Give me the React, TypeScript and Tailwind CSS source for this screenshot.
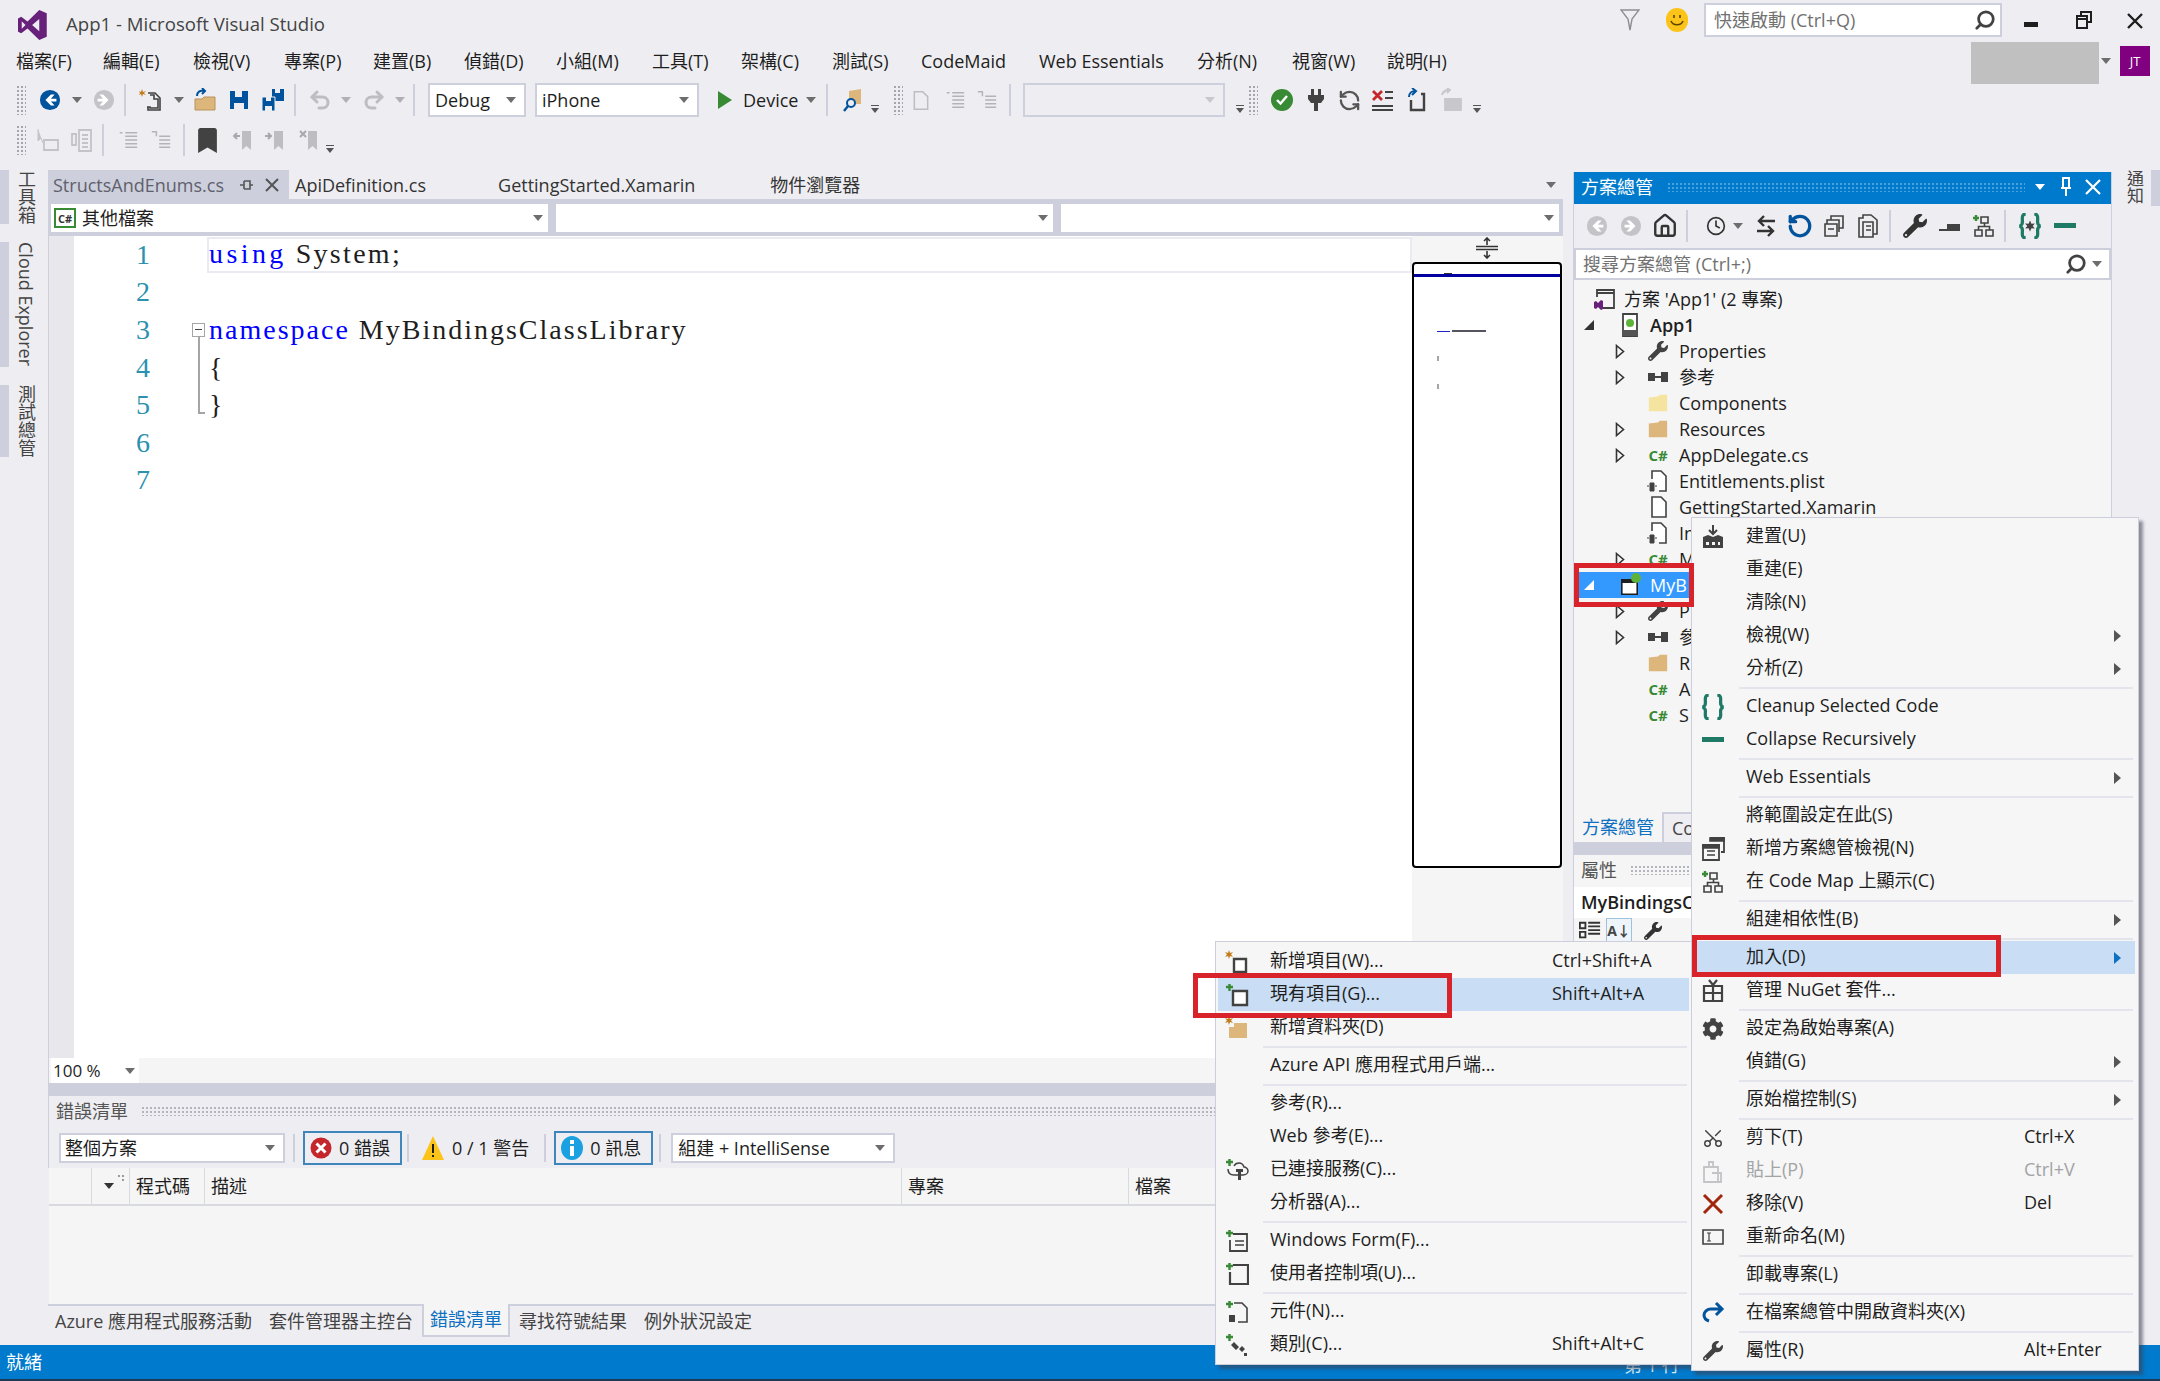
import type { ReactNode } from "react"
import { Redo2, Undo2, Scissors, RefreshCcw, RotateCw, Search, Clock, House } from "lucide-react"
import { FaBookmark, FaCog, FaWrench } from "react-icons/fa"

const Caret = ({ color = "#6d6d6d" }: { color?: string }) => (
  <svg width="10" height="6" viewBox="0 0 10 6" className="shrink-0">
    <path d="M0 0h10L5 6z" fill={color} />
  </svg>
)

const More = () => (
  <svg width="10" height="10" viewBox="0 0 10 10" className="mt-[18px]">
    <path d="M1 1h8v1H1zM1 4h8L5 9z" fill="#555" />
  </svg>
)

const Grip = () => <div className="h-[30px] w-[10px] shrink-0 bg-[radial-gradient(#a5a5ad_1px,transparent_1.2px)] bg-[length:4px_4px]" />
const Sep = () => <div className="h-[32px] w-[2px] shrink-0 bg-[#cdd0dc]" />

const Ico = ({ children, w = 24, h = 24 }: { children: ReactNode; w?: number; h?: number }) => (
  <svg width={w} height={h} viewBox="0 0 24 24" className="shrink-0">
    {children}
  </svg>
)

const VsLogo = ({ size = 30 }: { size?: number }) => (
  <svg width={size} height={size} viewBox="0 0 24 24" className="shrink-0">
    <path d="M17 0l6 2.6v18.8L17 24 7.6 14.8 2.6 18.6 0 17.3V6.7l2.6-1.3 5 3.8zM3 9v6l3-3zm14-1.9L11.3 12l5.7 4.9z" fill="#68217a" />
  </svg>
)

const CircleArrow = ({ color, dir }: { color: string; dir: "l" | "r" }) => (
  <Ico w={22} h={22}>
    <circle cx="12" cy="12" r="11" fill={color} />
    <path d={dir === "l" ? "M13 6l-6 6 6 6h4l-4-4.5h6v-3h-6L17 6z" : "M11 6l6 6-6 6H7l4-4.5H5v-3h6L7 6z"} fill="#fff" />
  </Ico>
)

const NewProjectIcon = () => (
  <Ico>
    <path d="M3 1l1 3 3-1-2 2 2 2-3-1-1 3-1-3-2 1 1-2-1-2 2 1z" fill="#c27d1a" />
    <path d="M9 5h7l5 5v12H9v-3h-1 3v1h8V11h-4V7H11" fill="none" stroke="#424242" strokeWidth="1.6" />
  </Ico>
)

const OpenIcon = () => (
  <Ico>
    <path d="M2 11h7l2-2h11v13H2z" fill="#dcb67a" stroke="#b8935a" strokeWidth="1" />
    <path d="M4 8c0-4 3-6 7-5M9 0l3 3-3 3" fill="none" stroke="#00539c" strokeWidth="2" />
  </Ico>
)

const SaveIcon = () => (
  <Ico>
    <path d="M3 3h18v18H3z" fill="#00539c" />
    <path d="M8 3h7v6H8zM7 15h10v6H7z" fill="#eeeef2" />
  </Ico>
)

const SaveAllIcon = () => (
  <Ico>
    <path d="M11 1h12v12H11z" fill="#00539c" />
    <path d="M14 1h5v4h-5z" fill="#eeeef2" />
    <path d="M1 9h13v14H1z" fill="#00539c" stroke="#eeeef2" />
    <path d="M5 9h5v4H5zM4 18h7v5H4z" fill="#eeeef2" />
  </Ico>
)

const DocLines = ({ color = "#b4b4b8" }: { color?: string }) => (
  <Ico w={22} h={22}>
    <path d="M9 4h13M9 8h13M9 12h13M9 16h13M9 20h13M3 4h3" stroke={color} strokeWidth="1.6" />
  </Ico>
)

const OutdentLines = () => (
  <Ico w={22} h={22}>
    <path d="M10 8h12M10 12h12M10 16h12M10 20h12" stroke="#b4b4b8" strokeWidth="1.6" />
    <path d="M2 3h5v5" fill="none" stroke="#b4b4b8" strokeWidth="1.6" />
  </Ico>
)

const GrayBookmark = ({ mark }: { mark: string }) => (
  <Ico>
    <path d="M10 3h9v19l-4.5-4-4.5 4z" fill="#bdbdc2" />
    <path d={mark} fill="none" stroke="#a8a8ae" strokeWidth="2" />
  </Ico>
)

const PlugIcon = ({ color = "#424242" }: { color?: string }) => (
  <Ico>
    <path d="M7 1h3v6H7zM14 1h3v6h-3zM4 7h16v4l-3 4h-3v8h-4v-8H7l-3-4z" fill={color} />
  </Ico>
)

const MapIcon = () => (
  <Ico>
    <path d="M1 4h6M4 1v6" stroke="#388a34" strokeWidth="2.4" />
    <path d="M9 3h7v6H9zM3 16h7v6H3zM14 16h7v6h-7zM12.5 9v3.5M6.500 16v-3.500h11V16" fill="none" stroke="#424242" strokeWidth="1.6" />
  </Ico>
)

const BracesIcon = ({ star = false }: { star?: boolean }) => (
  <Ico w={26} h={26}>
    <path d="M8 1C4 1 5 5 5 8c0 2-1 4-3 4 2 0 3 2 3 4 0 3-1 7 3 7M16 1c4 0 3 4 3 7 0 2 1 4 3 4-2 0-3 2-3 4 0 3 1 7-3 7" fill="none" stroke="#1e7a64" strokeWidth="3" />
    {star && <path d="M12 7l1.300 3 3.200-.4-2 2.400 2 2.400-3.200-.4L12 17l-1.300-3-3.200.4 2-2.400-2-2.400 3.200.4z" fill="#424242" />}
  </Ico>
)

const TealDash = () => (
  <Ico>
    <path d="M1 9h22v5H1z" fill="#1e7a64" />
  </Ico>
)

const DarkDash = () => (
  <Ico>
    <path d="M1 15h8v2H1zM9 10h13v7H9z" fill="#424242" />
  </Ico>
)

const Folder = ({ color = "#dcb67a" }: { color?: string }) => (
  <Ico w={22} h={22}>
    <path d="M2 6l10-1 2-2h8v18H2z" fill={color} />
  </Ico>
)

const FileIcon = ({ lock = false }: { lock?: boolean }) => (
  <Ico w={24} h={24}>
    <path d={lock ? "M6 10V2h9l5 5v15H13" : "M6 22V2h9l5 5v15z"} fill="#fff" stroke="#424242" strokeWidth="1.600" />
    {lock && <path d="M4 14h4v8H4zM1 17h2M9 17h2" fill="#424242" stroke="#424242" strokeWidth="1" />}
  </Ico>
)

const CSharp = () => <span className="text-[15px] leading-none font-bold text-[#388a34]">C#</span>

const PhoneApple = () => (
  <Ico>
    <path d="M5 1h14v22H5z" fill="#fff" stroke="#424242" strokeWidth="1.800" />
    <path d="M5 17h14v6H5z" fill="#555" />
    <circle cx="12" cy="10" r="4" fill="#5db33a" />
  </Ico>
)

const RefsIcon = () => (
  <Ico>
    <path d="M2 8h7v8H2zM15 7h7v10h-7zM9 11h6v2H9z" fill="#424242" />
  </Ico>
)

const SolutionIcon = () => (
  <Ico>
    <path d="M5 10V3h17v18H11" fill="none" stroke="#424242" strokeWidth="1.800" />
    <path d="M5 5h17v2H5z" fill="#424242" />
    <path d="M9 13l-3 3-2-2-2 1v6l2 1 2-2 3 3 2-1v-8z" fill="#68217a" />
  </Ico>
)

const TreeArrow = ({ open, white = false }: { open?: boolean; white?: boolean }) =>
  open ? (
    <svg width="12" height="12" viewBox="0 0 12 12">
      <path d="M1 11L11 1v10z" fill={white ? "#fff" : "#333"} />
    </svg>
  ) : (
    <svg width="10" height="15" viewBox="0 0 10 15">
      <path d="M1.500 1.500l7 6-7 6z" fill="none" stroke="#333" strokeWidth="1.600" />
    </svg>
  )

const treeRows: { label: string; level: number; arrow?: boolean; open?: boolean; icon: ReactNode; bold?: boolean; selected?: boolean }[] = [
  { label: "方案 'App1' (2 專案)", level: 0, icon: <SolutionIcon /> },
  { label: "App1", level: 1, arrow: true, open: true, bold: true, icon: <PhoneApple /> },
  { label: "Properties", level: 2, arrow: true, icon: <FaWrench size={20} color="#424242" /> },
  { label: "參考", level: 2, arrow: true, icon: <RefsIcon /> },
  { label: "Components", level: 2, icon: <Folder color="#f5e3a0" /> },
  { label: "Resources", level: 2, arrow: true, icon: <Folder /> },
  { label: "AppDelegate.cs", level: 2, arrow: true, icon: <CSharp /> },
  { label: "Entitlements.plist", level: 2, icon: <FileIcon lock /> },
  { label: "GettingStarted.Xamarin", level: 2, icon: <FileIcon /> },
  { label: "In", level: 2, icon: <FileIcon lock /> },
  { label: "M", level: 2, arrow: true, icon: <CSharp /> },
  {
    label: "MyB",
    level: 1,
    arrow: true,
    open: true,
    selected: true,
    icon: (
      <Ico>
        <path d="M3 6h17v16H3z" fill="#fff" />
        <path d="M3 6h17v4H3zM3 6h1.600v16H3zM18.400 6H20v16h-1.600zM3 20.400h17V22H3z" fill="#1e1e1e" />
        <circle cx="18" cy="5" r="5" fill="#5db33a" />
      </Ico>
    ),
  },
  { label: "P", level: 2, arrow: true, icon: <FaWrench size={20} color="#424242" /> },
  { label: "參", level: 2, arrow: true, icon: <RefsIcon /> },
  { label: "R", level: 2, icon: <Folder /> },
  { label: "A", level: 2, icon: <CSharp /> },
  { label: "S", level: 2, icon: <CSharp /> },
]

function TreeRow({ row }: { row: (typeof treeRows)[number] }) {
  return (
    <div className={`flex h-[26px] shrink-0 items-center ${row.selected ? "bg-[#3399ff] text-white" : ""}`}>
      {row.level === 0 && <div className="w-[18px] shrink-0" />}
      {row.level === 1 && (
        <div className="flex w-[44px] shrink-0 justify-end pr-[23px]">
          <TreeArrow open white={row.selected} />
        </div>
      )}
      {row.level === 2 && <div className="flex w-[71px] shrink-0 justify-end pr-[20px]">{row.arrow && <TreeArrow />}</div>}
      <div className={`flex shrink-0 items-center justify-center ${row.level === 2 ? "w-[26px]" : "w-[24px]"}`}>{row.icon}</div>
      <span className={`ml-[8px] whitespace-nowrap ${row.bold ? "font-semibold" : ""}`}>{row.label}</span>
    </div>
  )
}

type MenuItem =
  | { sep: true }
  | { sep?: false; label: string; icon?: ReactNode; shortcut?: string; sub?: boolean; active?: boolean; disabled?: boolean }

const PlusMark = () => <path d="M1 4h7M4.500 1v7" stroke="#388a34" strokeWidth="2.400" />
const StarMark = () => <path d="M4 0l1 3 3-1-2 2.500L8 7 5 6 4 9 3 6 0 7l2-2.500L0 2l3 1z" fill="#c27d1a" />

const rightMenu: MenuItem[] = [
  { label: "建置(U)", icon: <Ico><path d="M12 0v8M8 5l4 4 4-4" fill="none" stroke="#424242" strokeWidth="2" /><path d="M2 12l5-2 5 2 5-2 5 2v11H2z" fill="#424242" /><path d="M5 17h3v3H5zM11 17h3v3h-3zM17 17h2v3h-2z" fill="#f6f6f6" /></Ico> },
  { label: "重建(E)" },
  { label: "清除(N)" },
  { label: "檢視(W)", sub: true },
  { label: "分析(Z)", sub: true },
  { sep: true },
  { label: "Cleanup Selected Code", icon: <BracesIcon /> },
  { label: "Collapse Recursively", icon: <TealDash /> },
  { sep: true },
  { label: "Web Essentials", sub: true },
  { sep: true },
  { label: "將範圍設定在此(S)" },
  { label: "新增方案總管檢視(N)", icon: <Ico><path d="M9 1h14v14h-3M2 8h16v15H2z" fill="none" stroke="#424242" strokeWidth="1.800" /><path d="M2 8h16v3H2zM9 1h14v3H9zM6 14h8M6 18h8" stroke="#424242" strokeWidth="1.600" fill="#424242" /></Ico> },
  { label: "在 Code Map 上顯示(C)", icon: <MapIcon /> },
  { sep: true },
  { label: "組建相依性(B)", sub: true },
  { sep: true },
  { label: "加入(D)", sub: true, active: true },
  { label: "管理 NuGet 套件...", icon: <Ico><path d="M8 1l4 5 4-5M3 7h18v15H3zM3 14h18M12 7v15" fill="none" stroke="#424242" strokeWidth="2.200" /></Ico> },
  { sep: true },
  { label: "設定為啟始專案(A)", icon: <FaCog size={22} color="#424242" /> },
  { label: "偵錯(G)", sub: true },
  { sep: true },
  { label: "原始檔控制(S)", sub: true },
  { sep: true },
  { label: "剪下(T)", shortcut: "Ctrl+X", icon: <Scissors size={22} color="#424242" className="-rotate-90" strokeWidth={1.600} /> },
  { label: "貼上(P)", shortcut: "Ctrl+V", disabled: true, icon: <Ico><path d="M3 8h14v15H3zM8 8V3h4v5M11 14h9v9h-9" fill="none" stroke="#c4c4c8" strokeWidth="1.800" /></Ico> },
  { label: "移除(V)", shortcut: "Del", icon: <Ico><path d="M3 3l18 18M21 3L3 21" stroke="#a1260d" strokeWidth="3" /></Ico> },
  { label: "重新命名(M)", icon: <Ico><path d="M2 5h20v14H2z" fill="none" stroke="#424242" strokeWidth="1.600" /><path d="M6 8h4M6 16h4M8 8v8" stroke="#424242" strokeWidth="1.200" /></Ico> },
  { sep: true },
  { label: "卸載專案(L)" },
  { sep: true },
  { label: "在檔案總管中開啟資料夾(X)", icon: <Ico><path d="M21 8H10c-4 0-7 3-7 6s2 5 5 6M15 2l6 6-6 6" fill="none" stroke="#00539c" strokeWidth="3" /></Ico> },
  { sep: true },
  { label: "屬性(R)", shortcut: "Alt+Enter", icon: <FaWrench size={20} color="#424242" /> },
]

const leftMenu: MenuItem[] = [
  { label: "新增項目(W)...", shortcut: "Ctrl+Shift+A", icon: <Ico><StarMark /><path d="M9 9h12v13H9z" fill="#fff" stroke="#424242" strokeWidth="2.400" /></Ico> },
  { label: "現有項目(G)...", shortcut: "Shift+Alt+A", active: true, icon: <Ico><PlusMark /><path d="M8 8h14v14H8z" fill="#fff" stroke="#424242" strokeWidth="2.400" /></Ico> },
  { label: "新增資料夾(D)", icon: <Ico><StarMark /><path d="M9 7h13v15H4V11h5z" fill="#dcb67a" /></Ico> },
  { sep: true },
  { label: "Azure API 應用程式用戶端..." },
  { sep: true },
  { label: "參考(R)..." },
  { label: "Web 參考(E)..." },
  { label: "已連接服務(C)...", icon: <Ico><PlusMark /><path d="M3 11c0 4 2 6 6 6h9c3 0 5-2 5-4s-2-4-4-4c-1-3-3-4-5-4s-4 1-5 3" fill="none" stroke="#424242" strokeWidth="1.500" /><path d="M11 11h7v3h-2v8h-3v-8h-2z" fill="#424242" /></Ico> },
  { label: "分析器(A)..." },
  { sep: true },
  { label: "Windows Form(F)...", icon: <Ico><PlusMark /><path d="M8 5h14v17H5V11" fill="none" stroke="#424242" strokeWidth="1.800" /><path d="M10 12h9M10 16h9" stroke="#424242" strokeWidth="1.500" /></Ico> },
  { label: "使用者控制項(U)...", icon: <Ico><PlusMark /><path d="M8 3h15v19H5V10" fill="none" stroke="#424242" strokeWidth="2.200" /></Ico> },
  { sep: true },
  { label: "元件(N)...", icon: <Ico><PlusMark /><path d="M9 3h8l5 5v14H13" fill="none" stroke="#424242" strokeWidth="1.600" /><path d="M4 15h6v7H4z" fill="#424242" /></Ico> },
  { label: "類別(C)...", shortcut: "Shift+Alt+C", icon: <Ico><PlusMark /><path d="M9 9l5 5-3 3-5-5zM17 13l3 3-3 3-3-3zM11 16h4" fill="#424242" /><path d="M19 20h3v3h-3z" fill="#424242" /></Ico> },
]

function ContextMenu({ items, className, rowPad, shortcutWidth, sepInset }: { items: MenuItem[]; className: string; rowPad: string; shortcutWidth: string; sepInset: string }) {
  return (
    <div className={`absolute z-20 flex flex-col border border-[#cccedb] bg-[#f6f6f6] shadow-[4px_4px_3px_rgba(60,62,80,0.55)] ${className}`}>
      {items.map((item, i) => {
        if (item.sep) {
          return (
            <div key={i} className={`mr-[2px] flex h-[5px] shrink-0 items-center ${sepInset}`}>
              <div className="h-[2px] w-full bg-[#e4e5ec]" />
            </div>
          )
        }
        return (
          <div key={i} className={`flex h-[33px] shrink-0 items-center ${rowPad} ${item.active ? "bg-[#c9def5]" : ""} ${item.disabled ? "text-[#a2a4a5]" : "text-[#1e1e1e]"}`}>
            <div className="flex w-[32px] shrink-0 items-center justify-center">{item.icon}</div>
            <span className="ml-[17px] flex-1 pb-[3px] whitespace-nowrap">{item.label}</span>
            {item.shortcut && <span className={`shrink-0 pb-[3px] whitespace-nowrap ${shortcutWidth}`}>{item.shortcut}</span>}
            {item.sub && (
              <svg width="7" height="12" viewBox="0 0 7 12" className="mr-[14px] shrink-0">
                <path d="M0 0l7 6-7 6z" fill={item.active ? "#0e70c0" : "#555"} />
              </svg>
            )}
          </div>
        )
      })}
    </div>
  )
}

const Combo = ({ children, className }: { children?: ReactNode; className: string }) => (
  <div className={`flex items-center justify-between border-2 border-[#cdd0dc] bg-white pr-[8px] ${className}`}>
    <span className="flex items-center whitespace-nowrap">{children}</span>
    <Caret />
  </div>
)

const menus: { label: string; width: string }[] = [
  { label: "檔案(F)", width: "w-[87px]" },
  { label: "編輯(E)", width: "w-[90px]" },
  { label: "檢視(V)", width: "w-[91px]" },
  { label: "專案(P)", width: "w-[89px]" },
  { label: "建置(B)", width: "w-[91px]" },
  { label: "偵錯(D)", width: "w-[92px]" },
  { label: "小組(M)", width: "w-[96px]" },
  { label: "工具(T)", width: "w-[89px]" },
  { label: "架構(C)", width: "w-[91px]" },
  { label: "測試(S)", width: "w-[89px]" },
  { label: "CodeMaid", width: "w-[118px]" },
  { label: "Web Essentials", width: "w-[158px]" },
  { label: "分析(N)", width: "w-[95px]" },
  { label: "視窗(W)", width: "w-[95px]" },
  { label: "說明(H)", width: "w-[80px]" },
]

export default function App() {
  return (
    <div className="relative flex h-[1381px] w-[2160px] flex-col overflow-hidden bg-[#eeeef2] font-['Open_Sans','Noto_Sans_CJK_TC',sans-serif] text-[18px] leading-none text-[#1e1e1e]">
      {/* Title bar */}
      <div className="flex h-[42px] shrink-0 items-start">
        <div className="mt-[10px] ml-[18px]">
          <VsLogo />
        </div>
        <span className="mt-[15px] ml-[18px] text-[18.600px] text-[#444]">App1 - Microsoft Visual Studio</span>
        <div className="flex-1" />
        <svg width="20" height="22" viewBox="0 0 20 22" className="mt-[9px]">
          <path d="M1 1h18l-7 9-2 11-2-11z" fill="none" stroke="#8e8e92" strokeWidth="1.400" />
        </svg>
        <div className="mt-[8px] ml-[26px] flex h-[24px] w-[22px] items-center justify-center rounded-full bg-[#fcc419]">
          <svg width="14" height="14" viewBox="0 0 14 14">
            <path d="M4 2v3M10 2v3M1 8c2 5 10 5 12 0" fill="none" stroke="#5a4500" strokeWidth="1.600" />
          </svg>
        </div>
        <div className="mt-[3px] ml-[16px] flex h-[34px] w-[298px] items-center justify-between border-2 border-[#cdd0dc] bg-white pr-[4px] pl-[8px] text-[#717171]">
          <span>快速啟動 (Ctrl+Q)</span>
          <Search size={22} color="#424242" strokeWidth={3} className="-scale-x-100" />
        </div>
        <div className="mt-[22px] ml-[22px] h-[5px] w-[14px] bg-[#1e1e1e]" />
        <svg width="16" height="18" viewBox="0 0 16 18" className="mt-[11px] ml-[38px]">
          <path d="M5 4V1h10v10h-3M1 5h10v12H1zM1 8h10" fill="none" stroke="#1e1e1e" strokeWidth="2" />
        </svg>
        <svg width="16" height="16" viewBox="0 0 16 16" className="mt-[13px] ml-[35px]">
          <path d="M1 1l14 14M15 1L1 15" stroke="#1e1e1e" strokeWidth="2.400" />
        </svg>
        <div className="w-[17px]" />
      </div>

      {/* Menu bar */}
      <div className="flex h-[38px] shrink-0 items-center pl-[16px]">
        {menus.map((m) => (
          <span key={m.label} className={`shrink-0 whitespace-nowrap ${m.width}`}>
            {m.label}
          </span>
        ))}
        <div className="flex-1" />
        <div className="mt-[4px] h-[42px] w-[128px] bg-[#c0c0c0]" />
        <div className="ml-[2px]">
          <Caret />
        </div>
        <div className="mr-[10px] ml-[9px] flex h-[30px] w-[30px] items-center justify-center bg-[#800080] text-[13px] text-white">JT</div>
      </div>

      {/* Toolbar 1 */}
      <div className="flex h-[40px] shrink-0 items-center pl-[16px]">
        <Grip />
        <div className="ml-[13px]">
          <CircleArrow color="#00539c" dir="l" />
        </div>
        <div className="ml-[11px]">
          <Caret />
        </div>
        <div className="ml-[11px]">
          <CircleArrow color="#c4c4c8" dir="r" />
        </div>
        <div className="ml-[9px]">
          <Sep />
        </div>
        <div className="ml-[13px]">
          <NewProjectIcon />
        </div>
        <div className="ml-[11px]">
          <Caret />
        </div>
        <div className="ml-[9px]">
          <OpenIcon />
        </div>
        <div className="ml-[10px]">
          <SaveIcon />
        </div>
        <div className="ml-[10px]">
          <SaveAllIcon />
        </div>
        <div className="ml-[9px]">
          <Sep />
        </div>
        <Undo2 size={24} color="#bdbdc2" strokeWidth={3} className="ml-[12px]" />
        <div className="ml-[9px]">
          <Caret color="#b0b0b5" />
        </div>
        <Redo2 size={24} color="#bdbdc2" strokeWidth={3} className="ml-[11px]" />
        <div className="ml-[9px]">
          <Caret color="#b0b0b5" />
        </div>
        <div className="ml-[8px]">
          <Sep />
        </div>
        <Combo className="ml-[13px] h-[34px] w-[98px] pl-[5px]">Debug</Combo>
        <Combo className="ml-[9px] h-[34px] w-[164px] pl-[5px]">iPhone</Combo>
        <svg width="14" height="18" viewBox="0 0 14 18" className="ml-[19px]">
          <path d="M0 0l14 9L0 18z" fill="#388a34" />
        </svg>
        <span className="ml-[11px]">Device</span>
        <div className="ml-[8px]">
          <Caret />
        </div>
        <div className="ml-[10px]">
          <Sep />
        </div>
        <div className="ml-[15px]">
          <Ico>
            <path d="M6 3l12-2v15H6z" fill="#dcb67a" />
            <circle cx="8" cy="15" r="4" fill="#eeeef2" stroke="#00539c" strokeWidth="2" />
            <path d="M5 18l-4 5" stroke="#00539c" strokeWidth="2.400" />
          </Ico>
        </div>
        <div className="ml-[3px]">
          <More />
        </div>
        <div className="ml-[13px]">
          <Grip />
        </div>
        <div className="ml-[8px]">
          <Ico w={20} h={22}>
            <path d="M4 2h10l6 6v15H4z" fill="none" stroke="#bdbdc2" strokeWidth="1.800" />
          </Ico>
        </div>
        <div className="ml-[13px]">
          <DocLines />
        </div>
        <div className="ml-[10px]">
          <OutdentLines />
        </div>
        <div className="ml-[11px]">
          <Sep />
        </div>
        <div className="ml-[12px] h-[34px] w-[202px] border-2 border-[#cdd0dc] pr-[8px]">
          <div className="flex h-full items-center justify-end">
            <Caret color="#c8c8cc" />
          </div>
        </div>
        <div className="ml-[10px]">
          <More />
        </div>
        <div className="ml-[3px]">
          <Grip />
        </div>
        <div className="ml-[13px] flex h-[22px] w-[22px] items-center justify-center rounded-full bg-[#388a34]">
          <svg width="12" height="10" viewBox="0 0 12 10">
            <path d="M1 5l3.500 3.500L11 1" fill="none" stroke="#fff" strokeWidth="2.400" />
          </svg>
        </div>
        <div className="ml-[11px]">
          <PlugIcon />
        </div>
        <RefreshCcw size={23} color="#555" strokeWidth={2.400} className="ml-[10px]" />
        <div className="ml-[10px]">
          <Ico>
            <path d="M2 3l9 9M11 3l-9 9" stroke="#c5262c" strokeWidth="2.800" />
            <path d="M14 4h8M14 10h8M1 18h21M1 22h21" stroke="#424242" strokeWidth="2" />
          </Ico>
        </div>
        <div className="ml-[10px]">
          <Ico>
            <path d="M6 12v10h13V6h-3" fill="none" stroke="#424242" strokeWidth="2.400" />
            <path d="M4 9c0-4 3-6 6-6M7 0l4 3-4 4" fill="none" stroke="#00539c" strokeWidth="2" />
          </Ico>
        </div>
        <div className="ml-[10px]">
          <Ico>
            <path d="M6 11h16v11H6zM3 7c0-3 3-5 6-5M8 0l3 2-3 3" fill="#c8c8cc" stroke="#c8c8cc" strokeWidth="1.800" />
          </Ico>
        </div>
        <div className="ml-[9px]">
          <More />
        </div>
      </div>

      {/* Toolbar 2 */}
      <div className="flex h-[40px] shrink-0 items-center pl-[16px]">
        <Grip />
        <div className="ml-[10px]">
          <Ico>
            <path d="M2 1v12l3-3 2 5" fill="#c4c4c8" stroke="#c4c4c8" />
            <path d="M8 12h14v10H8z" fill="none" stroke="#c4c4c8" strokeWidth="1.800" />
          </Ico>
        </div>
        <div className="ml-[9px]">
          <Ico>
            <path d="M10 2h12v21H10zM3 6h4v11H3zM13 7h6M13 11h6M13 15h6M13 19h6" fill="none" stroke="#c4c4c8" strokeWidth="1.800" />
          </Ico>
        </div>
        <div className="ml-[9px]">
          <Sep />
        </div>
        <div className="ml-[13px]">
          <DocLines />
        </div>
        <div className="ml-[11px]">
          <OutdentLines />
        </div>
        <div className="ml-[11px]">
          <Sep />
        </div>
        <FaBookmark size={25} color="#424242" className="ml-[10px]" />
        <div className="ml-[12px]">
          <GrayBookmark mark="M8 8H2M5 5L2 8l3 3" />
        </div>
        <div className="ml-[8px]">
          <GrayBookmark mark="M1 8h6M4 5l3 3-3 3" />
        </div>
        <div className="ml-[10px]">
          <GrayBookmark mark="M2 3l6 6M8 3l-6 6" />
        </div>
        <div className="ml-[3px]">
          <More />
        </div>
      </div>

      {/* Main area */}
      <div className="mt-[10px] flex h-[1175px] shrink-0 items-start">
        {/* Left rail */}
        <div className="flex w-[48px] shrink-0 flex-col gap-[18px] text-[#444]">
          <div className="flex h-[54px]">
            <div className="w-[9px] bg-[#cdd0dc]" />
            <span className="ml-[8px] text-[18px] [writing-mode:vertical-rl]">工具箱</span>
          </div>
          <div className="flex h-[125px]">
            <div className="w-[9px] bg-[#cdd0dc]" />
            <span className="ml-[8px] text-[18px] whitespace-nowrap [writing-mode:vertical-rl]">Cloud Explorer</span>
          </div>
          <div className="flex h-[72px]">
            <div className="w-[9px] bg-[#cdd0dc]" />
            <span className="ml-[8px] text-[18px] [writing-mode:vertical-rl]">測試總管</span>
          </div>
        </div>

        {/* Center column */}
        <div className="flex h-full w-[1515px] shrink-0 flex-col">
          {/* Tabs */}
          <div className="flex h-[29px] shrink-0 items-center">
            <div className="flex h-full w-[241px] items-center bg-[#cdd0dc] pl-[5px] text-[#60606c]">
              <span>StructsAndEnums.cs</span>
              <svg width="14" height="14" viewBox="0 0 14 14" className="ml-[15px]">
                <path d="M1 7h4M5 3v8M5 3h6v8H5M11 7h3" fill="none" stroke="#555" strokeWidth="1.600" />
              </svg>
              <svg width="14" height="14" viewBox="0 0 14 14" className="ml-[12px]">
                <path d="M1 1l12 12M13 1L1 13" stroke="#555" strokeWidth="2" />
              </svg>
            </div>
            <span className="ml-[6px] text-[#333]">ApiDefinition.cs</span>
            <span className="ml-[72px] text-[#333]">GettingStarted.Xamarin</span>
            <span className="ml-[75px] text-[#333]">物件瀏覽器</span>
            <div className="flex-1" />
            <div className="mr-[7px]">
              <Caret />
            </div>
          </div>

          {/* Navigation bar */}
          <div className="flex h-[37px] shrink-0 items-start gap-[8px] bg-[#cdd0dc] pt-[5px] pr-[4px] pl-[3px]">
            <div className="flex h-[28px] w-[497px] items-center justify-between bg-white pr-[5px] pl-[3px]">
              <span className="flex items-center gap-[6px]">
                <span className="flex h-[20px] w-[22px] items-center justify-center border-2 border-[#388a34] text-[11px] font-bold text-[#333]">C#</span>
                其他檔案
              </span>
              <Caret />
            </div>
            <div className="flex h-[28px] w-[497px] items-center justify-end bg-white pr-[5px]">
              <Caret />
            </div>
            <div className="flex h-[28px] flex-1 items-center justify-end bg-white pr-[5px]">
              <Caret />
            </div>
          </div>

          {/* Editor */}
          <div className="flex h-[822px] shrink-0 border-l border-[#cdd0dc]">
            <div className="w-[25px] shrink-0 bg-[#e8e8ec]" />
            <div className="flex flex-1 flex-col bg-white font-['Liberation_Serif',serif] text-[28px]">
              <div className="flex h-[37.6px] items-center">
                <span className="w-[76px] text-right text-[#2b91af]">1</span>
                <div className="w-[57px]" />
                <div className="flex h-[36px] flex-1 items-center border-2 border-[#eaeaf2] pb-[1px]">
                  <span className="tracking-[3.400px] text-[#0000ff]">using</span>
                  <span className="ml-[9px] tracking-[2.300px]">System;</span>
                </div>
              </div>
              <div className="flex h-[37.6px] items-center">
                <span className="w-[76px] text-right text-[#2b91af]">2</span>
              </div>
              <div className="flex h-[37.6px] items-center">
                <span className="w-[76px] text-right text-[#2b91af]">3</span>
                <div className="relative flex h-full w-[59px] items-center">
                  <div className="absolute top-[25px] bottom-0 left-[48px] w-[2px] bg-[#a5a5a5]" />
                  <div className="ml-[42px] flex h-[14px] w-[13px] items-center justify-center border border-[#a5a5a5] bg-white">
                    <div className="h-[1px] w-[7px] bg-[#424242]" />
                  </div>
                </div>
                <span className="tracking-[2px]">
                  <span className="text-[#0000ff]">namespace</span> MyBindingsClassLibrary
                </span>
              </div>
              <div className="flex h-[37.6px] items-center">
                <span className="w-[76px] text-right text-[#2b91af]">4</span>
                <div className="relative h-full w-[59px]">
                  <div className="absolute top-0 bottom-0 left-[48px] w-[2px] bg-[#a5a5a5]" />
                </div>
                <span>{"{"}</span>
              </div>
              <div className="flex h-[37.6px] items-center">
                <span className="w-[76px] text-right text-[#2b91af]">5</span>
                <div className="relative h-full w-[59px]">
                  <div className="absolute top-0 bottom-[10px] left-[48px] w-[2px] bg-[#a5a5a5]" />
                  <div className="absolute bottom-[10px] left-[48px] h-[2px] w-[7px] bg-[#a5a5a5]" />
                </div>
                <span>{"}"}</span>
              </div>
              <div className="flex h-[37.6px] items-center">
                <span className="w-[76px] text-right text-[#2b91af]">6</span>
              </div>
              <div className="flex h-[37.6px] items-center">
                <span className="w-[76px] text-right text-[#2b91af]">7</span>
              </div>
            </div>
            {/* Code map scroll bar */}
            <div className="flex w-[151px] shrink-0 flex-col bg-[#f5f5f5] pr-[1px]">
              <div className="flex h-[24px] shrink-0 items-center justify-center">
                <svg width="24" height="22" viewBox="0 0 24 22">
                  <path d="M1 9.500h22M1 12.500h22M12 1v7M12 14v7M9 4l3-3 3 3M9 18l3 3 3-3" fill="none" stroke="#333" strokeWidth="1.600" />
                </svg>
              </div>
              <div className="mt-[2px] h-[606px] w-[150px] shrink-0 rounded-[4px] border-2 border-black bg-white">
                <svg width="146" height="602" viewBox="0 0 146 602">
                  <path d="M0 10h146v3H0z" fill="#0000a0" />
                  <path d="M30 9h8v1h-8z" fill="#333" />
                  <path d="M23 67h13v1H23z" fill="#2222cc" />
                  <path d="M38 66h34v2H38z" fill="#55555f" />
                  <path d="M23 92h2v5h-2zM23 120h2v5h-2z" fill="#a5a5a5" />
                </svg>
              </div>
            </div>
          </div>

          {/* Zoom row */}
          <div className="flex h-[25px] shrink-0 items-center border-l border-[#cdd0dc] bg-[#f5f5f5] pl-[2px]">
            <div className="flex h-full w-[88px] items-center justify-between bg-white pr-[4px] pl-[2px] text-[17px]">
              100 %
              <Caret />
            </div>
          </div>
          <div className="h-[13px] shrink-0 bg-[#cdd0dc]" />

          {/* Error list */}
          <div className="flex h-[32px] shrink-0 items-center border-l border-[#cdd0dc] pb-[2px] pl-[7px] text-[#555]">
            <span>錯誤清單</span>
            <div className="ml-[13px] h-[10px] flex-1 bg-[radial-gradient(#b4b4bc_1px,transparent_1.2px)] bg-[length:4px_4px]" />
          </div>
          <div className="flex h-[40px] shrink-0 items-center border-l border-[#cdd0dc] pl-[10px]">
            <Combo className="h-[30px] w-[226px] pl-[4px]">整個方案</Combo>
            <div className="ml-[8px] h-[28px] w-[2px] bg-[#cdd0dc]" />
            <div className="ml-[8px] flex h-[34px] w-[99px] items-center gap-[7px] border-2 border-[#3f86bd] pl-[5px]">
              <svg width="22" height="22" viewBox="0 0 22 22">
                <circle cx="11" cy="11" r="10.500" fill="#c5262c" />
                <path d="M6.500 6.500l9 9M15.500 6.500l-9 9" stroke="#fff" strokeWidth="3" />
              </svg>
              0 錯誤
            </div>
            <div className="ml-[5px] h-[28px] w-[2px] bg-[#cdd0dc]" />
            <div className="ml-[13px] flex items-center gap-[8px]">
              <svg width="22" height="24" viewBox="0 0 22 24">
                <path d="M11 0l11 24H0z" fill="#fcc419" />
                <path d="M10 8h2v9h-2zM10 19h2v2h-2z" fill="#1e1e1e" />
              </svg>
              <span className="whitespace-nowrap">0 / 1 警告</span>
            </div>
            <div className="ml-[15px] h-[28px] w-[2px] bg-[#cdd0dc]" />
            <div className="ml-[8px] flex h-[34px] w-[99px] items-center gap-[7px] border-2 border-[#3f86bd] pl-[5px]">
              <svg width="22" height="24" viewBox="0 0 22 24">
                <ellipse cx="11" cy="12" rx="11" ry="12" fill="#1ba1e2" />
                <path d="M9 10h4v10H9zM9 4h4v4H9z" fill="#fff" />
              </svg>
              0 訊息
            </div>
            <div className="ml-[6px] h-[28px] w-[2px] bg-[#cdd0dc]" />
            <Combo className="ml-[10px] h-[30px] w-[224px] pl-[5px]">組建 + IntelliSense</Combo>
          </div>
          <div className="ml-[1px] flex h-[38px] shrink-0 items-center border-b-2 border-[#d9dadf] bg-[#f5f5f5] pl-[4px]">
            <div className="w-[38px]" />
            <div className="relative flex h-full w-[38px] items-center border-l border-[#d9dadf] pl-[12px]">
              <Caret color="#333" />
              <svg width="8" height="10" viewBox="0 0 8 10" className="absolute top-[6px] right-[4px]">
                <path d="M1 1h2v2H1zM5 1h2v2H5zM5 5h2v2H5z" fill="#9a9aa0" />
              </svg>
            </div>
            <div className="flex h-full w-[75px] items-center border-l border-[#d9dadf] pl-[6px]">程式碼</div>
            <div className="flex h-full w-[697px] items-center border-l border-[#d9dadf] pl-[6px]">描述</div>
            <div className="flex h-full w-[227px] items-center border-l border-[#d9dadf] pl-[6px]">專案</div>
            <div className="flex h-full flex-1 items-center border-l border-[#d9dadf] pl-[6px]">檔案</div>
          </div>
          <div className="ml-[1px] flex-1 bg-[#f5f5f5]" />
          <div className="flex h-[41px] shrink-0 border-t-2 border-[#cdd0dc] text-[#444]">
            <span className="mt-[6px] ml-[7px] whitespace-nowrap">Azure 應用程式服務活動</span>
            <span className="mt-[6px] ml-[17px] whitespace-nowrap">套件管理器主控台</span>
            <div className="-mt-[2px] ml-[9px] flex h-[33px] w-[88px] items-center justify-center border-x-2 border-b-2 border-[#cdd0dc] bg-[#f5f5f5] pb-[2px] text-[#0e70c0]">錯誤清單</div>
            <span className="mt-[6px] ml-[9px] whitespace-nowrap">尋找符號結果</span>
            <span className="mt-[6px] ml-[17px] whitespace-nowrap">例外狀況設定</span>
          </div>
        </div>

        {/* Solution explorer */}
        <div className="mt-[2px] ml-[10px] flex h-[1173px] w-[539px] shrink-0 flex-col border-x border-[#cdd0dc]">
          <div className="flex h-[32px] shrink-0 items-center bg-[#007acc] pr-[10px] pb-[2px] pl-[7px] text-white">
            <span>方案總管</span>
            <div className="ml-[14px] h-[10px] flex-1 bg-[radial-gradient(#4aa3dc_1px,transparent_1.2px)] bg-[length:4px_4px]" />
            <div className="ml-[10px]">
              <Caret color="#fff" />
            </div>
            <svg width="12" height="20" viewBox="0 0 12 20" className="ml-[15px]">
              <path d="M3 1h6v10H3zM1 11h10M6 11v8" fill="none" stroke="#fff" strokeWidth="2" />
            </svg>
            <svg width="16" height="16" viewBox="0 0 16 16" className="ml-[13px]">
              <path d="M1 1l14 14M15 1L1 15" stroke="#fff" strokeWidth="2.200" />
            </svg>
          </div>
          <div className="flex h-[44px] shrink-0 items-center pl-[12px]">
            <CircleArrow color="#c4c4c8" dir="l" />
            <div className="ml-[12px]">
              <CircleArrow color="#c4c4c8" dir="r" />
            </div>
            <House size={26} color="#333" strokeWidth={2.200} className="ml-[10px]" />
            <div className="ml-[8px]">
              <Sep />
            </div>
            <Clock size={20} color="#333" className="ml-[18px]" />
            <div className="ml-[7px]">
              <Caret />
            </div>
            <svg width="20" height="24" viewBox="0 0 20 24" className="ml-[13px]">
              <path d="M19 7H4M8 2L3 7l5 5M1 17h15M12 12l5 5-5 5" fill="none" stroke="#333" strokeWidth="2.400" />
            </svg>
            <RotateCw size={26} color="#00539c" strokeWidth={3} className="ml-[11px] -scale-x-100" />
            <svg width="22" height="24" viewBox="0 0 22 24" className="ml-[10px]">
              <path d="M8 6V2h12v12h-4M4 10V6h12v12M2 10h12v12H2zM5 15h6" fill="none" stroke="#424242" strokeWidth="1.600" />
            </svg>
            <svg width="24" height="26" viewBox="0 0 24 26" className="ml-[11px]">
              <path d="M3 5h4V2h8l6 5v14h-4v3H3zM17 21V9H7v15M10 13h5M10 17h5" fill="none" stroke="#424242" strokeWidth="1.600" />
            </svg>
            <div className="ml-[9px]">
              <Sep />
            </div>
            <FaWrench size={24} color="#333" className="ml-[12px]" />
            <div className="ml-[11px]">
              <DarkDash />
            </div>
            <div className="ml-[10px]">
              <MapIcon />
            </div>
            <div className="ml-[8px]">
              <Sep />
            </div>
            <div className="ml-[11px]">
              <BracesIcon star />
            </div>
            <div className="ml-[10px]">
              <TealDash />
            </div>
          </div>
          <div className="flex h-[32px] shrink-0 items-center justify-between border-2 border-[#cdd0dc] bg-white pr-[7px] pl-[7px] text-[#717171]">
            <span>搜尋方案總管 (Ctrl+;)</span>
            <div className="flex items-center gap-[5px]">
              <Search size={22} color="#424242" strokeWidth={3} className="-scale-x-100" />
              <Caret />
            </div>
          </div>
          <div className="flex h-[533px] shrink-0 flex-col overflow-hidden bg-[#f5f5f5] pt-[6px]">
            {treeRows.map((row, i) => (
              <TreeRow key={i} row={row} />
            ))}
          </div>
          <div className="flex h-[30px] shrink-0 items-center border-b border-[#cdd0dc] bg-[#f5f5f5] pb-[2px]">
            <span className="ml-[8px] text-[#0e70c0]">方案總管</span>
            <div className="ml-[8px] flex h-[30px] flex-1 items-center border-t-2 border-l-2 border-[#cdd0dc] bg-[#eeeef2] pl-[8px] text-[#444]">Co</div>
          </div>
          <div className="h-[12px] shrink-0 bg-[#cdd0dc]" />
          <div className="flex h-[32px] shrink-0 items-center bg-[#f5f5f5] pb-[2px] pl-[7px] text-[#555]">
            <span>屬性</span>
            <div className="ml-[13px] h-[10px] flex-1 bg-[radial-gradient(#b4b4bc_1px,transparent_1.2px)] bg-[length:4px_4px]" />
          </div>
          <div className="flex h-[31px] shrink-0 items-center bg-white pb-[2px] pl-[7px] font-semibold whitespace-nowrap">MyBindingsC</div>
          <div className="flex h-[26px] shrink-0 items-center gap-[5px] bg-[#f5f5f5] pl-[5px]">
            <Ico w={22} h={22}>
              <path d="M1 3h6v6H1zM1 13h6v6H1zM10 3h13M10 7h13M10 11h13M10 15h13" fill="none" stroke="#333" strokeWidth="2" />
            </Ico>
            <div className="flex h-[26px] w-[26px] items-center justify-center border border-[#9cc2de] bg-[#eef4fa] text-[14px] font-bold text-[#444]">A↓</div>
            <FaWrench size={18} color="#333" className="ml-[7px]" />
          </div>
          <div className="flex-1 bg-[#f5f5f5]" />
        </div>

        {/* Right rail */}
        <div className="ml-[14px] flex h-[36px] flex-1 justify-between">
          <span className="text-[17px] text-[#444] [writing-mode:vertical-rl]">通知</span>
          <div className="w-[9px] bg-[#cdd0dc]" />
        </div>
      </div>

      {/* Status bar */}
      <div className="flex h-[36px] shrink-0 items-center border-b-2 border-[#1c3a55] bg-[#007acc] pl-[6px] text-white">
        <span>就緒</span>
        <span className="mt-[6px] ml-[1582px] text-[#d6ebf8]">第 1 行</span>
      </div>

      {/* Context menus */}
      <ContextMenu
        items={leftMenu}
        className="top-[941px] left-[1215px] w-[478px] pt-[3px] pr-[3px] pb-[3px] pl-[2px]"
        rowPad="pl-[3px]"
        shortcutWidth="w-[137px]"
        sepInset="ml-[45px]"
      />
      <ContextMenu
        items={rightMenu}
        className="top-[517px] left-[1691px] w-[448px] pt-[2px] pr-[3px] pb-[3px] pl-[5px]"
        rowPad=""
        shortcutWidth="w-[111px]"
        sepInset="ml-[42px]"
      />

      {/* Red annotation boxes */}
      <div className="absolute top-[563px] left-[1574px] z-30 h-[44px] w-[120px] border-[5px] border-[#d8232a]" />
      <div className="absolute top-[935px] left-[1692px] z-30 h-[42px] w-[309px] border-[5px] border-[#d8232a]" />
      <div className="absolute top-[973px] left-[1193px] z-30 h-[45px] w-[259px] border-[5px] border-[#d8232a]" />
    </div>
  )
}
